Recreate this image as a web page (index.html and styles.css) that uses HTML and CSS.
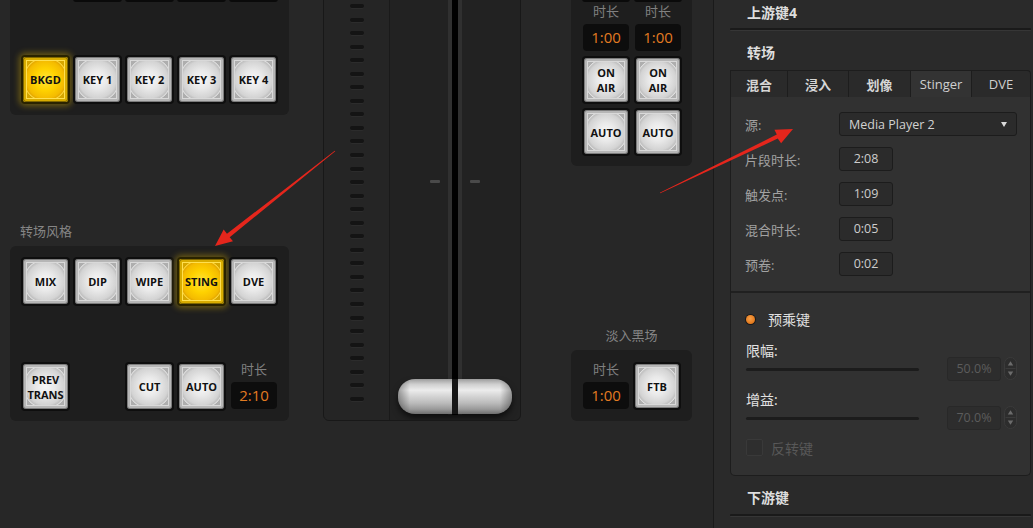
FILE: index.html
```html
<!DOCTYPE html>
<html>
<head>
<meta charset="utf-8">
<link rel="stylesheet" href="styles.css">
</head>
<body>
<div class="app">
  <div class="col-left">
    <div class="panel keys">
      <div class="stubs"><span></span><span></span><span></span><span></span></div>
      <div class="btn-row">
        <div class="btn on"><div class="face">BKGD</div></div>
        <div class="btn"><div class="face">KEY 1</div></div>
        <div class="btn"><div class="face">KEY 2</div></div>
        <div class="btn"><div class="face">KEY 3</div></div>
        <div class="btn"><div class="face">KEY 4</div></div>
      </div>
    </div>
    <div class="sect-label">转场风格</div>
    <div class="panel trans">
      <div class="btn-row">
        <div class="btn"><div class="face">MIX</div></div>
        <div class="btn"><div class="face">DIP</div></div>
        <div class="btn"><div class="face">WIPE</div></div>
        <div class="btn on"><div class="face">STING</div></div>
        <div class="btn"><div class="face">DVE</div></div>
      </div>
      <div class="btn-row trans-bottom">
        <div class="btn"><div class="face two">PREV<br>TRANS</div></div>
        <div class="btn skip"><div class="face">CUT</div></div>
        <div class="btn"><div class="face">AUTO</div></div>
        <div class="dur">
          <div class="dur-label">时长</div>
          <div class="disp">2:10</div>
        </div>
      </div>
    </div>
  </div>

  <div class="fader">
    <div class="strip">
      <div class="ticks">
        <i></i><i></i><i></i><i></i><i></i><i></i><i></i><i></i><i></i><i></i>
        <i></i><i></i><i></i><i></i><i></i><i></i><i></i><i></i><i></i><i></i>
        <i></i><i></i><i></i><i></i><i></i><i></i><i></i><i></i><i></i><i></i>
      </div>
    </div>
    <div class="track">
      <div class="slot"></div>
      <span class="mark m1"></span>
      <span class="mark m2"></span>
      <div class="handle"></div>
    </div>
  </div>

  <div class="col-mid">
    <div class="panel mix">
      <div class="stubs mid"><span></span><span></span></div>
      <div class="pair labels"><span>时长</span><span>时长</span></div>
      <div class="pair disps"><div class="disp">1:00</div><div class="disp">1:00</div></div>
      <div class="pair btns">
        <div class="btn sm"><div class="face two">ON<br>AIR</div></div>
        <div class="btn sm"><div class="face two">ON<br>AIR</div></div>
      </div>
      <div class="pair btns second">
        <div class="btn sm"><div class="face">AUTO</div></div>
        <div class="btn sm"><div class="face">AUTO</div></div>
      </div>
    </div>
    <div class="sect-label center">淡入黑场</div>
    <div class="panel ftb">
      <div class="dur">
        <div class="dur-label">时长</div>
        <div class="disp">1:00</div>
      </div>
      <div class="btn sm ftb-btn"><div class="face">FTB</div></div>
    </div>
  </div>

  <div class="side">
    <div class="hdr first">上游键4</div>
    <div class="sep"></div>
    <div class="hdr second">转场</div>
    <div class="tabs">
      <span>混合</span><span>浸入</span><span>划像</span><span class="active latin">Stinger</span><span class="latin">DVE</span>
    </div>
    <div class="box">
      <div class="form">
        <div class="frow"><label>源:</label><div class="select">Media Player 2<i class="caret"></i></div></div>
        <div class="frow"><label>片段时长:</label><div class="inp">2:08</div></div>
        <div class="frow"><label>触发点:</label><div class="inp">1:09</div></div>
        <div class="frow"><label>混合时长:</label><div class="inp">0:05</div></div>
        <div class="frow"><label>预卷:</label><div class="inp">0:02</div></div>
      </div>
      <div class="key">
        <div class="radio-row"><span class="radio"></span>预乘键</div>
        <div class="slider-row">
          <div class="sl-left"><div class="sl-label">限幅:</div><div class="sl-track"></div></div>
          <div class="spin">50.0%</div>
          <svg class="spinbtn" width="13" height="23" viewBox="0 0 13 23"><rect x="0.5" y="0.5" width="12" height="22" rx="6" fill="#2d2d2d" stroke="#3b3b3b"/><line x1="1.5" y1="11.5" x2="11.5" y2="11.5" stroke="#3b3b3b"/><path d="M3.8 8.6 L6.5 4.2 L9.2 8.6Z" fill="#6c6c6c"/><path d="M3.8 14.4 L6.5 18.8 L9.2 14.4Z" fill="#6c6c6c"/></svg>
        </div>
        <div class="slider-row s2">
          <div class="sl-left"><div class="sl-label">增益:</div><div class="sl-track"></div></div>
          <div class="spin">70.0%</div>
          <svg class="spinbtn" width="13" height="23" viewBox="0 0 13 23"><rect x="0.5" y="0.5" width="12" height="22" rx="6" fill="#2d2d2d" stroke="#3b3b3b"/><line x1="1.5" y1="11.5" x2="11.5" y2="11.5" stroke="#3b3b3b"/><path d="M3.8 8.6 L6.5 4.2 L9.2 8.6Z" fill="#6c6c6c"/><path d="M3.8 14.4 L6.5 18.8 L9.2 14.4Z" fill="#6c6c6c"/></svg>
        </div>
        <div class="check-row"><span class="check"></span>反转键</div>
      </div>
    </div>
    <div class="hdr third">下游键</div>
    <div class="sep"></div>
  </div>
</div>

<svg class="arrows" width="1033" height="528" viewBox="0 0 1033 528">
  <polygon fill="#e5261c" points="335.25,151.31 229.70,237.17 232.99,241.33 215,246 223.67,229.57 226.96,233.73 334.75,150.69"/>
  <polygon fill="#e5261c" points="660.18,193.36 777.75,138.53 781.10,143.28 793,129 774.43,129.84 776.79,134.59 659.82,192.64"/>
</svg>
</body>
</html>
```

FILE: styles.css
```css
* { box-sizing: border-box; }

body {
  margin: 0;
  width: 1033px;
  height: 528px;
  overflow: hidden;
  position: relative;
  background: #272727;
  font-family: "Open Sans", "Noto Sans CJK SC", sans-serif;
}

.app {
  display: flex;
  align-items: flex-start;
}

/* ---------- left column ---------- */
.col-left {
  margin-left: 10px;
  width: 279px;
}

.panel {
  background: #1e1e1e;
  border-radius: 6px;
}

.keys {
  margin-top: -10px;
  height: 125px;
}

.stubs {
  display: flex;
  gap: 3px;
  padding-left: 63px;
}

.stubs span {
  width: 49px;
  height: 12px;
  background: #0a0a0a;
  border-radius: 0 0 3px 3px;
}

.btn-row {
  display: flex;
  align-items: flex-start;
  gap: 3px;
  padding-left: 11px;
}

.keys .btn-row {
  margin-top: 53px;
}

.sect-label {
  color: #858585;
  font-size: 13px;
  line-height: 20px;
  margin-top: 106px;
  padding-left: 10px;
}

.trans {
  margin-top: 5px;
  height: 175px;
  padding-top: 11px;
}

.trans-bottom {
  margin-top: 56px;
}

.skip {
  margin-left: 52px;
}

/* ---------- buttons ---------- */
.btn {
  width: 49px;
  height: 49px;
  padding: 2px;
  border-radius: 4px;
  background: #0e0e0e;
  flex: none;
}

.btn.sm {
  width: 48px;
  height: 48px;
}

.face {
  width: 100%;
  height: 100%;
  border-radius: 3px;
  display: flex;
  align-items: center;
  justify-content: center;
  text-align: center;
  font-size: 11px;
  font-weight: 700;
  color: #111;
  background:
    linear-gradient(135deg, rgba(255,255,255,0.35) 0, rgba(255,255,255,0) 10%, rgba(255,255,255,0) 90%, rgba(255,255,255,0.35) 100%),
    radial-gradient(circle closest-side at 50% 50%, #f8f8f8 0%, #e9e9e9 42%, #d3d3d3 82%, #c0c0c0 92%, #e2e2e2 97%, #aeaeae 100%);
  box-shadow: inset 0 0 0 1px #7c7c7c, inset 0 0 0 3px #b6b6b6, inset 0 0 0 4px #d9d9d9;
}

.face.two {
  line-height: 15px;
}

.btn.on {
  background: #2a2300;
  box-shadow: 0 0 6px 2px rgba(255, 205, 0, 0.35);
}

.btn.on .face {
  background: radial-gradient(circle closest-side at 50% 50%, #ffe43a 0%, #ffd200 48%, #f4bb00 84%, #e6aa00 92%, #ffdc44 97%, #d6a600 100%);
  box-shadow: inset 0 0 0 1px #806800, inset 0 0 0 3px #d8ac00, inset 0 0 0 4px #ffe050;
}

/* ---------- duration displays ---------- */
.dur {
  width: 46px;
  margin-left: 2px;
  margin-top: -1px;
  flex: none;
}

.dur-label {
  font-size: 13px;
  line-height: 16px;
  color: #808080;
  text-align: center;
}

.disp {
  width: 46px;
  height: 27px;
  margin-top: 5px;
  background: #0d0d0d;
  border-radius: 4px;
  color: #e27b22;
  font-size: 15px;
  line-height: 27px;
  text-align: center;
}

/* ---------- fader ---------- */
.fader {
  margin-left: 34px;
  margin-top: -10px;
  width: 198px;
  height: 431px;
  border: 1px solid #181818;
  border-radius: 0 0 6px 6px;
  background: #222222;
  display: flex;
  overflow: hidden;
}

.strip {
  width: 66px;
  border-right: 1px solid #1a1a1a;
  background: #252525;
}

.ticks {
  margin: 13px 0 0 26px;
  height: 397px;
  display: flex;
  flex-direction: column;
  justify-content: space-between;
}

.ticks i {
  display: block;
  width: 14px;
  height: 4px;
  border-radius: 2px;
  background: #141414;
  box-shadow: 0 1px 0 #2c2c2c;
}

.track {
  flex: 1;
  position: relative;
  display: flex;
  justify-content: center;
}

.slot {
  width: 14px;
  height: 424px;
  background: #000;
  border-left: 4px solid #303030;
  border-right: 4px solid #303030;
}

.mark {
  position: absolute;
  top: 189px;
  width: 10px;
  height: 3px;
  border-radius: 1px;
  background: #4a4a4a;
}

.m1 { left: 40px; }
.m2 { left: 80px; }

.handle {
  position: absolute;
  left: 8px;
  top: 388px;
  width: 114px;
  height: 35px;
  border-radius: 17px / 16px;
  background:
    linear-gradient(to right, transparent 54px, #161616 54px, #161616 60px, transparent 60px),
    linear-gradient(to right, rgba(0,0,0,0.35) 0, rgba(0,0,0,0) 12px, rgba(0,0,0,0) 102px, rgba(0,0,0,0.35) 114px),
    linear-gradient(to bottom, #9c9c9c 0%, #cfcfcf 15%, #ececec 32%, #d6d6d6 48%, #bcbcbc 68%, #9a9a9a 86%, #6e6e6e 100%);
  box-shadow: 0 4px 6px rgba(0, 0, 0, 0.6);
}

/* ---------- middle column ---------- */
.col-mid {
  margin-left: 50px;
  width: 121px;
}

.mix {
  margin-top: -10px;
  height: 176px;
}

.stubs.mid {
  padding-left: 11px;
  gap: 4px;
}

.stubs.mid span {
  width: 48px;
}

.pair {
  display: flex;
}

.labels {
  padding-left: 12px;
  gap: 6px;
  margin-top: 1px;
}

.labels span {
  width: 46px;
  text-align: center;
  font-size: 13px;
  line-height: 17px;
  color: #808080;
}

.disps {
  padding-left: 12px;
  gap: 6px;
  margin-top: 4px;
}

.disps .disp {
  margin-top: 0;
}

.btns {
  padding-left: 11px;
  gap: 4px;
  margin-top: 5px;
}

.btns.second {
  margin-top: 4px;
}

.sect-label.center {
  text-align: center;
  padding-left: 0;
  margin-top: 159px;
}

.ftb {
  margin-top: 5px;
  height: 71px;
  display: flex;
  align-items: flex-start;
  padding-left: 12px;
}

.ftb .dur {
  margin: 11px 0 0 0;
}

.ftb-btn {
  margin-left: 4px;
  margin-top: 12px;
  height: 49px;
}

/* ---------- right side panel ---------- */
.side {
  margin-left: 21px;
  width: 320px;
  height: 528px;
  border-left: 1px solid #1a1a1a;
  background: #2a2a2a;
}

.hdr {
  padding-left: 33px;
  color: #dedede;
  font-size: 14px;
  font-weight: 700;
  line-height: 20px;
}

.hdr.first {
  height: 28px;
  line-height: 25px;
}

.hdr.second {
  padding-top: 12px;
}

.hdr.third {
  margin-top: 12px;
}

.sep {
  margin-left: 16px;
  margin-right: 2px;
  border-top: 2px solid #1a1a1a;
  border-bottom: 1px solid #363636;
  border-radius: 1px;
}

.hdr.third + .sep {
  margin-top: 6px;
}

.tabs {
  margin: 7px 0 0 16px;
  width: 301px;
  height: 27px;
  display: flex;
}

.tabs span {
  height: 27px;
  border-top: 1px solid #1d1d1d;
  border-right: 1px solid #1d1d1d;
  background: #2a2a2a;
  display: flex;
  align-items: center;
  justify-content: center;
  font-size: 13px;
  font-weight: 700;
  color: #d6d6d6;
}

.tabs span:nth-child(1) { width: 58px; border-left: 1px solid #1d1d1d; }
.tabs span:nth-child(2) { width: 61px; }
.tabs span:nth-child(3) { width: 62px; }
.tabs span:nth-child(4) { width: 61px; }
.tabs span:nth-child(5) { width: 59px; border-top-right-radius: 4px; }

.tabs .latin {
  font-weight: 400;
  color: #cfcfcf;
}

.tabs .active {
  background: #333333;
}

.box {
  margin-left: 16px;
  width: 301px;
  height: 379px;
  background: #313131;
  border: 1px solid #1d1d1d;
  border-top: 0;
  border-radius: 0 0 5px 5px;
}

.form {
  padding: 15px 0 15px 14px;
}

.frow {
  display: flex;
  align-items: center;
  height: 24px;
  margin-bottom: 11px;
}

.frow:last-child {
  margin-bottom: 0;
}

.frow label {
  width: 94px;
  font-size: 13px;
  color: #a2a2a2;
}

.select {
  width: 178px;
  height: 24px;
  padding-left: 9px;
  display: flex;
  align-items: center;
  background: #2b2b2b;
  border: 1px solid #1c1c1c;
  border-radius: 3px;
  font-size: 12.5px;
  color: #d2d2d2;
}

.caret {
  margin-left: auto;
  margin-right: 9px;
  width: 0;
  height: 0;
  border-left: 3.5px solid transparent;
  border-right: 3.5px solid transparent;
  border-top: 5px solid #dadada;
}

.inp {
  width: 54px;
  height: 24px;
  background: #2b2b2b;
  border: 1px solid #1c1c1c;
  border-radius: 3px;
  font-size: 12.5px;
  color: #cdcdcd;
  line-height: 22px;
  text-align: center;
}

.key {
  border-top: 2px solid #202020;
  padding-left: 15px;
}

.radio-row {
  margin-top: 16px;
  display: flex;
  align-items: center;
  height: 20px;
  font-size: 14px;
  color: #e0e0e0;
}

.radio {
  width: 9px;
  height: 9px;
  border-radius: 50%;
  background: radial-gradient(circle at 45% 40%, #f7a048 0%, #e2771a 70%, #c9620e 100%);
  box-shadow: 0 0 0 1px #1a1a1a;
  margin-right: 13px;
}

.slider-row {
  margin-top: 12px;
  display: flex;
  align-items: flex-end;
}

.slider-row.s2 {
  margin-top: 9px;
}

.sl-left {
  width: 201px;
  padding-bottom: 10px;
}

.sl-label {
  font-size: 14px;
  line-height: 20px;
  color: #e2e2e2;
}

.sl-track {
  margin-top: 7px;
  width: 173px;
  height: 3px;
  border-radius: 2px;
  background: #1c1c1c;
}

.spin {
  width: 54px;
  height: 24px;
  background: #2d2d2d;
  border: 1px solid #282828;
  border-radius: 3px;
  font-size: 12.5px;
  color: #5c5c5c;
  line-height: 22px;
  text-align: center;
}

.spinbtn {
  margin-left: 3px;
  margin-bottom: 1px;
  flex: none;
}

.check-row {
  margin-top: 9px;
  display: flex;
  align-items: center;
  height: 17px;
  font-size: 14px;
  color: #585858;
}

.check {
  width: 17px;
  height: 17px;
  border-radius: 2px;
  background: #2e2e2e;
  border: 1px solid #393939;
  margin-right: 8px;
}

/* ---------- overlay arrows ---------- */
.arrows {
  position: absolute;
  left: 0;
  top: 0;
  pointer-events: none;
}
```
